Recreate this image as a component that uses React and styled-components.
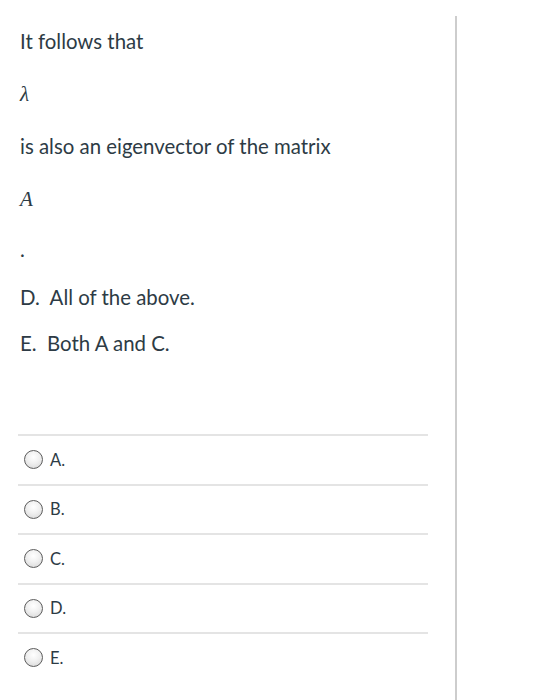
import React from 'react';
import styled, { createGlobalStyle } from 'styled-components';

const GlobalStyle = createGlobalStyle`
  html, body {
    margin: 0;
    padding: 0;
    background: #ffffff;
  }
  body {
    font-family: Lato, "Liberation Sans", sans-serif;
    color: #2d3b45;
  }
`;

const Page = styled.div`
  display: flex;
  width: 538px;
  min-height: 700px;
  padding-top: 16px;
  box-sizing: border-box;
`;

const Question = styled.div`
  width: 457px;
  padding: 12px 0 0 18px;
  box-sizing: border-box;
  border-right: 2px solid #cdcdcd;
`;

const Para = styled.p`
  margin: 0 0 ${(p) => p.$after ?? 26}px;
  padding-left: 2px;
  font-size: 20.4px;
  line-height: 26px;
`;

const Math = styled.span`
  font-family: "Liberation Serif", "DejaVu Serif", serif;
  font-style: italic;
  font-size: 21px;
`;

const Answers = styled.div`
  margin-top: 78px;
  width: 410px;
`;

const Row = styled.label`
  display: flex;
  align-items: center;
  gap: 7px;
  height: 49.5px;
  border-top: 2px solid #e4e4e4;
  padding-left: 6px;
  box-sizing: border-box;
  font-size: 16.5px;
`;

const Radio = styled.span`
  width: 19px;
  height: 19px;
  border-radius: 50%;
  border: 1.5px solid #5c5c5c;
  background: radial-gradient(circle at 50% 35%, #ffffff 0%, #f0f0f0 45%, #d4d4d4 100%);
  box-sizing: border-box;
  flex: none;
`;

export default function App() {
  const options = ['A.', 'B.', 'C.', 'D.', 'E.'];
  return (
    <>
      <GlobalStyle />
      <Page>
        <Question>
          <Para>It follows that</Para>
          <Para><Math>λ</Math></Para>
          <Para>is also an eigenvector of the matrix</Para>
          <Para $after={24}><Math>A</Math></Para>
          <Para $after={22}>.</Para>
          <Para $after={20}>D.&nbsp; All of the above.</Para>
          <Para $after={0}>E.&nbsp; Both A and C.</Para>
          <Answers>
            {options.map((o) => (
              <Row key={o}>
                <Radio />
                {o}
              </Row>
            ))}
          </Answers>
        </Question>
      </Page>
    </>
  );
}
